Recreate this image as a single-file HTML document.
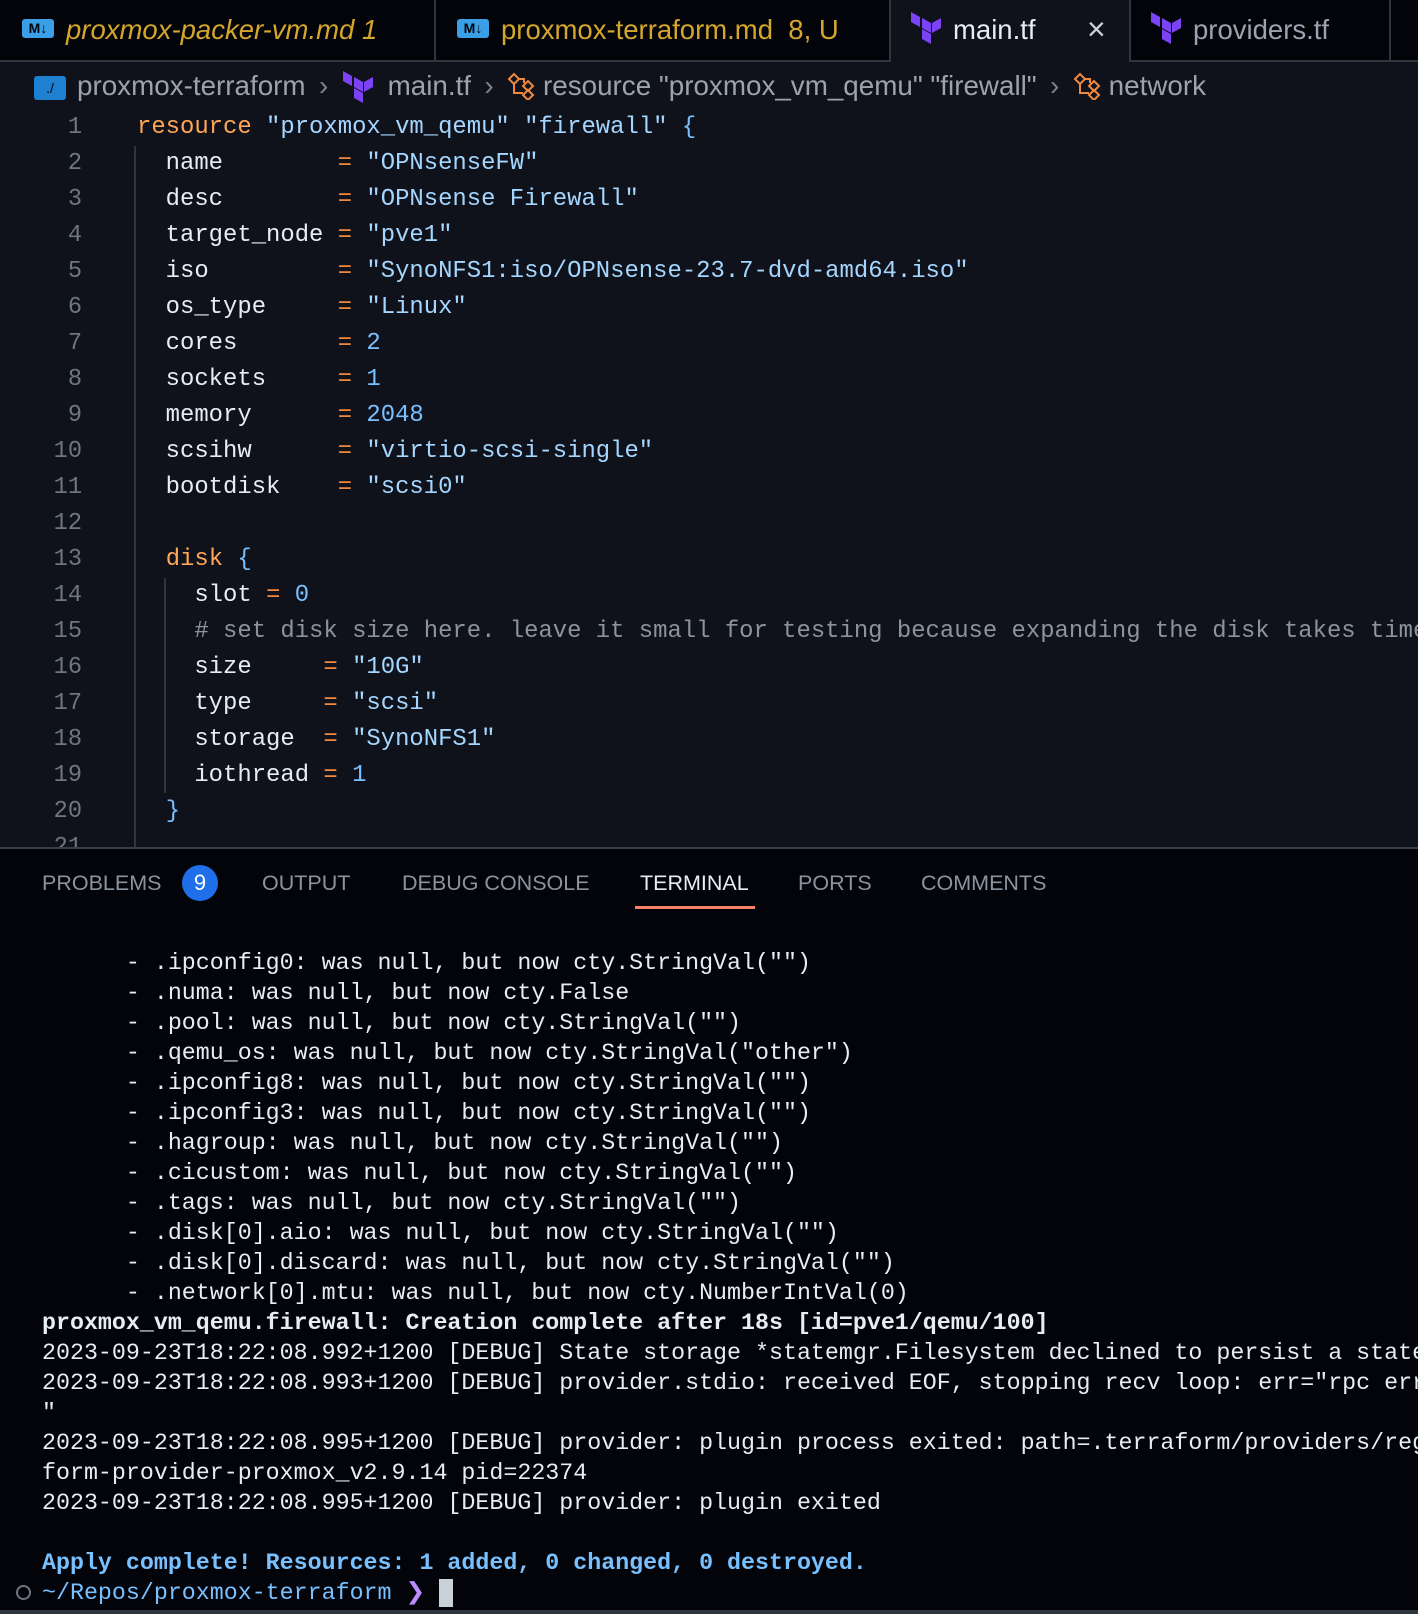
<!DOCTYPE html>
<html><head><meta charset="utf-8"><style>
*{margin:0;padding:0;box-sizing:border-box}
body{width:1418px;height:1614px;background:#02040a;position:relative;overflow:hidden;font-family:"Liberation Sans",sans-serif}
.abs{position:absolute;white-space:pre}
#tabs{position:absolute;left:0;top:0;width:1418px;height:62px;background:#02040a;border-bottom:2px solid #30363d}
.tab{position:absolute;top:0;height:62px;border-right:2px solid #30363d;font-size:27.5px;line-height:60px;white-space:pre}
#editor{position:absolute;left:0;top:62px;width:1418px;height:785px;background:#0f121a}
.ln{position:absolute;width:82px;text-align:right;color:#6e7681;font-family:"Liberation Mono",monospace;font-size:23.6px;line-height:36px}
.cl{position:absolute;left:137px;color:#e6edf3;font-family:"Liberation Mono",monospace;font-size:23.9px;line-height:36px;white-space:pre}
.k{color:#ffa657}.s{color:#a5d6ff}.n{color:#79c0ff}.o{color:#f0883e}.c{color:#8b949e}.b{color:#79c0ff}
#panel{position:absolute;left:0;top:847px;width:1418px;height:767px;background:#02040a;border-top:2px solid #3a3f47}
.pt{position:absolute;top:870px;font-size:21.5px;color:#8b949e;line-height:26px}
.tl{position:absolute;left:42px;color:#e6edf3;font-family:"Liberation Mono",monospace;font-size:23.3px;line-height:30px;white-space:pre}
.md{display:inline-block;width:32px;height:19px;background:#3b9fe8;border-radius:3px;color:#02040a;font-size:14px;font-weight:bold;line-height:19px;text-align:center;vertical-align:middle;margin-right:12px;position:relative;top:-3px;font-style:normal}
.ch{display:inline-block;width:36px;text-align:center;color:#7d8590}
.sym{display:inline-block;vertical-align:middle;margin:0 8px 0 0;position:relative;top:-2px}
</style></head><body>
<div id="tabs">
 <div class="tab" style="left:0;width:436px;padding-left:22px;color:#d4a72c;font-style:italic"><span class="md">M↓</span>proxmox-packer-vm.md 1</div>
 <div class="tab" style="left:436px;width:455px;padding-left:21px;color:#d4a72c"><span class="md">M↓</span>proxmox-terraform.md  8, U</div>
 <div class="tab" style="left:891px;width:240px;height:64px;background:#0f121a;padding-left:20px;color:#e6edf3"><svg width="32" height="34" viewBox="0 0 32 34" style="vertical-align:middle;margin-right:10px;position:relative;top:-3px"><path d="M11 6l9 5v10l-9-5z M21 11l9-5v10l-9 5z M0 0l9 5v10L0 10z M11 17l9 5v10l-9-5z" fill="#7b42f6"/></svg>main.tf<span style="position:absolute;left:196px;top:-1px;color:#c9d1d9;font-size:32px">×</span></div>
 <div class="tab" style="left:1131px;width:260px;padding-left:20px;color:#9ca3af"><svg width="32" height="34" viewBox="0 0 32 34" style="vertical-align:middle;margin-right:10px;position:relative;top:-3px"><path d="M11 6l9 5v10l-9-5z M21 11l9-5v10l-9 5z M0 0l9 5v10L0 10z M11 17l9 5v10l-9-5z" fill="#7b42f6"/></svg>providers.tf</div>
</div>
<div id="editor">
 <div class="abs" style="left:34px;top:8px;font-size:27.8px;line-height:32px;color:#9ca3af"><span style="display:inline-block;width:32px;height:24px;background:#1f7fd0;border-radius:3px;vertical-align:middle;margin-right:11px;color:#02040a;font-size:14px;line-height:24px;text-align:center">./</span>proxmox-terraform<span class="ch">›</span><svg width="34" height="34" viewBox="0 0 32 34" style="vertical-align:middle;margin-right:12px"><path d="M11 6l9 5v10l-9-5z M21 11l9-5v10l-9 5z M0 0l9 5v10L0 10z M11 17l9 5v10l-9-5z" fill="#7b42f6"/></svg>main.tf<span class="ch">›</span><svg class="sym" width="28" height="28" viewBox="0 0 28 28"><path d="M2 7l5-5 5 5-5 5z M16 14l5-5 5 5-5 5z M16 23l5-5 5 5-5 5z M7 12v9h9 M12 7h5v4" fill="none" stroke="#f0883e" stroke-width="2"/></svg>resource "proxmox_vm_qemu" "firewall"<span class="ch">›</span><svg class="sym" width="28" height="28" viewBox="0 0 28 28"><path d="M2 7l5-5 5 5-5 5z M16 14l5-5 5 5-5 5z M16 23l5-5 5 5-5 5z M7 12v9h9 M12 7h5v4" fill="none" stroke="#f0883e" stroke-width="2"/></svg>network</div>
</div>
<div style="position:absolute;left:134px;top:146px;width:2px;height:701px;background:#30363d"></div>
<div style="position:absolute;left:164px;top:578px;width:2px;height:215px;background:#30363d"></div>
<div class="ln" style="top:110px">1</div><div class="cl" style="top:110px"><span class="k">resource</span> <span class="s">"proxmox_vm_qemu"</span> <span class="s">"firewall"</span> <span class="b">{</span></div>
<div class="ln" style="top:146px">2</div><div class="cl" style="top:146px">  name        <span class="o">=</span> <span class="s">"OPNsenseFW"</span></div>
<div class="ln" style="top:182px">3</div><div class="cl" style="top:182px">  desc        <span class="o">=</span> <span class="s">"OPNsense Firewall"</span></div>
<div class="ln" style="top:218px">4</div><div class="cl" style="top:218px">  target_node <span class="o">=</span> <span class="s">"pve1"</span></div>
<div class="ln" style="top:254px">5</div><div class="cl" style="top:254px">  iso         <span class="o">=</span> <span class="s">"SynoNFS1:iso/OPNsense-23.7-dvd-amd64.iso"</span></div>
<div class="ln" style="top:290px">6</div><div class="cl" style="top:290px">  os_type     <span class="o">=</span> <span class="s">"Linux"</span></div>
<div class="ln" style="top:326px">7</div><div class="cl" style="top:326px">  cores       <span class="o">=</span> <span class="n">2</span></div>
<div class="ln" style="top:362px">8</div><div class="cl" style="top:362px">  sockets     <span class="o">=</span> <span class="n">1</span></div>
<div class="ln" style="top:398px">9</div><div class="cl" style="top:398px">  memory      <span class="o">=</span> <span class="n">2048</span></div>
<div class="ln" style="top:434px">10</div><div class="cl" style="top:434px">  scsihw      <span class="o">=</span> <span class="s">"virtio-scsi-single"</span></div>
<div class="ln" style="top:470px">11</div><div class="cl" style="top:470px">  bootdisk    <span class="o">=</span> <span class="s">"scsi0"</span></div>
<div class="ln" style="top:506px">12</div>
<div class="ln" style="top:542px">13</div><div class="cl" style="top:542px">  <span class="k">disk</span> <span class="b">{</span></div>
<div class="ln" style="top:578px">14</div><div class="cl" style="top:578px">    slot <span class="o">=</span> <span class="n">0</span></div>
<div class="ln" style="top:614px">15</div><div class="cl" style="top:614px">    <span class="c"># set disk size here. leave it small for testing because expanding the disk takes time</span></div>
<div class="ln" style="top:650px">16</div><div class="cl" style="top:650px">    size     <span class="o">=</span> <span class="s">"10G"</span></div>
<div class="ln" style="top:686px">17</div><div class="cl" style="top:686px">    type     <span class="o">=</span> <span class="s">"scsi"</span></div>
<div class="ln" style="top:722px">18</div><div class="cl" style="top:722px">    storage  <span class="o">=</span> <span class="s">"SynoNFS1"</span></div>
<div class="ln" style="top:758px">19</div><div class="cl" style="top:758px">    iothread <span class="o">=</span> <span class="n">1</span></div>
<div class="ln" style="top:794px">20</div><div class="cl" style="top:794px">  <span class="b">}</span></div>
<div class="ln" style="top:830px;height:17px;overflow:hidden">21</div>
<div id="panel"></div>
<div class="pt" style="left:42px">PROBLEMS</div>
<div class="abs" style="left:182px;top:865px;width:36px;height:36px;border-radius:18px;background:#1f6feb;color:#fff;font-size:22px;line-height:36px;text-align:center">9</div>
<div class="pt" style="left:262px">OUTPUT</div>
<div class="pt" style="left:402px">DEBUG CONSOLE</div>
<div class="pt" style="left:640px;color:#e6edf3">TERMINAL</div>
<div style="position:absolute;left:635px;top:906px;width:120px;height:3px;background:#f78166"></div>
<div class="pt" style="left:798px">PORTS</div>
<div class="pt" style="left:921px">COMMENTS</div>
<div class="tl" style="top:948px">      - .ipconfig0: was null, but now cty.StringVal("")</div>
<div class="tl" style="top:978px">      - .numa: was null, but now cty.False</div>
<div class="tl" style="top:1008px">      - .pool: was null, but now cty.StringVal("")</div>
<div class="tl" style="top:1038px">      - .qemu_os: was null, but now cty.StringVal("other")</div>
<div class="tl" style="top:1068px">      - .ipconfig8: was null, but now cty.StringVal("")</div>
<div class="tl" style="top:1098px">      - .ipconfig3: was null, but now cty.StringVal("")</div>
<div class="tl" style="top:1128px">      - .hagroup: was null, but now cty.StringVal("")</div>
<div class="tl" style="top:1158px">      - .cicustom: was null, but now cty.StringVal("")</div>
<div class="tl" style="top:1188px">      - .tags: was null, but now cty.StringVal("")</div>
<div class="tl" style="top:1218px">      - .disk[0].aio: was null, but now cty.StringVal("")</div>
<div class="tl" style="top:1248px">      - .disk[0].discard: was null, but now cty.StringVal("")</div>
<div class="tl" style="top:1278px">      - .network[0].mtu: was null, but now cty.NumberIntVal(0)</div>
<div class="tl" style="top:1308px;font-weight:bold">proxmox_vm_qemu.firewall: Creation complete after 18s [id=pve1/qemu/100]</div>
<div class="tl" style="top:1338px">2023-09-23T18:22:08.992+1200 [DEBUG] State storage *statemgr.Filesystem declined to persist a state</div>
<div class="tl" style="top:1368px">2023-09-23T18:22:08.993+1200 [DEBUG] provider.stdio: received EOF, stopping recv loop: err="rpc error</div>
<div class="tl" style="top:1398px">"</div>
<div class="tl" style="top:1428px">2023-09-23T18:22:08.995+1200 [DEBUG] provider: plugin process exited: path=.terraform/providers/regi</div>
<div class="tl" style="top:1458px">form-provider-proxmox_v2.9.14 pid=22374</div>
<div class="tl" style="top:1488px">2023-09-23T18:22:08.995+1200 [DEBUG] provider: plugin exited</div>
<div class="tl" style="top:1548px;font-weight:bold;color:#79c0ff">Apply complete! Resources: 1 added, 0 changed, 0 destroyed.</div>
<div class="abs" style="left:16px;top:1585px;width:15px;height:15px;border:2px solid #6e7681;border-radius:50%"></div>
<div class="tl" style="top:1578px;color:#79c0ff">~/Repos/proxmox-terraform <span style="color:#bc8cff">❯</span> <span style="display:inline-block;width:14px;height:28px;background:#c9d1d9;vertical-align:middle"></span></div>
<div style="position:absolute;left:0;top:1610px;width:1418px;height:4px;background:#30363d"></div>
</body></html>
